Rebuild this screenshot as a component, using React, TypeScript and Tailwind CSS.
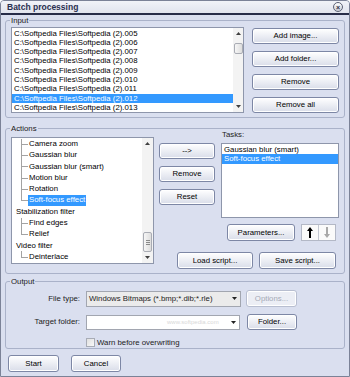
import React from "react";

const btnBase =
  "flex items-center justify-center rounded-[3px] border leading-none shadow-[inset_0_0_0_1px_#ffffff]";
const btnOn = "border-[#7d87a5] bg-linear-to-b from-white to-[#d9dde9] text-black";
const btnOff = "border-[#b8bed0] bg-[#eceef5] text-[#a4a9b6]";

function Btn({
  children,
  className = "",
  disabled = false,
}: {
  children: React.ReactNode;
  className?: string;
  disabled?: boolean;
}) {
  return (
    <button className={`${btnBase} ${disabled ? btnOff : btnOn} ${className}`}>
      {children}
    </button>
  );
}

function Arrow({ down = false, color = "#404040" }: { down?: boolean; color?: string }) {
  return (
    <svg width="5" height="3" viewBox="0 0 5 3">
      <path d={down ? "M0 0H5L2.5 3Z" : "M0 3H5L2.5 0Z"} fill={color} />
    </svg>
  );
}

// flat scrollbar: arrow, gap, thumb, track, arrow
function ScrollBar({
  gapTop,
  thumbH,
  grip = false,
  className = "",
}: {
  gapTop: number;
  thumbH: number;
  grip?: boolean;
  className?: string;
}) {
  return (
    <div className={`flex h-full flex-col items-center bg-[#f3f3f3] ${className}`}>
      <div className="flex h-[11px] w-full items-center justify-center">
        <Arrow />
      </div>
      <div style={{ height: gapTop }} />
      <div
        className="flex w-[9px] flex-col items-center justify-center gap-[1px] rounded-[2px] border border-[#a9acb4] bg-linear-to-r from-[#f6f6f6] to-[#dedede]"
        style={{ height: thumbH }}
      >
        {grip && (
          <>
            <div className="h-px w-[4px] bg-[#8a8a8a]" />
            <div className="h-px w-[4px] bg-[#8a8a8a]" />
            <div className="h-px w-[4px] bg-[#8a8a8a]" />
          </>
        )}
      </div>
      <div className="flex-1" />
      <div className="flex h-[11px] w-full items-center justify-center">
        <Arrow down />
      </div>
    </div>
  );
}

function Group({
  label,
  className = "",
  children,
}: {
  label: string;
  className?: string;
  children: React.ReactNode;
}) {
  return (
    <div className={`relative mx-[4px] rounded-[3px] border border-[#aab2c9] ${className}`}>
      <span className="absolute -top-[5px] left-[4px] bg-[#dadfef] px-[1px] leading-[9px] text-[#1a1a1a]">
        {label}
      </span>
      {children}
    </div>
  );
}

const files = [
  "C:\\Softpedia Files\\Softpedia (2).005",
  "C:\\Softpedia Files\\Softpedia (2).006",
  "C:\\Softpedia Files\\Softpedia (2).007",
  "C:\\Softpedia Files\\Softpedia (2).008",
  "C:\\Softpedia Files\\Softpedia (2).009",
  "C:\\Softpedia Files\\Softpedia (2).010",
  "C:\\Softpedia Files\\Softpedia (2).011",
  "C:\\Softpedia Files\\Softpedia (2).012",
  "C:\\Softpedia Files\\Softpedia (2).013",
];

const tree = [
  { t: "Camera zoom", child: true },
  { t: "Gaussian blur", child: true },
  { t: "Gaussian blur (smart)", child: true },
  { t: "Motion blur", child: true },
  { t: "Rotation", child: true },
  { t: "Soft-focus effect", child: true, last: true, sel: true },
  { t: "Stabilization filter" },
  { t: "Find edges", child: true },
  { t: "Relief", child: true, last: true },
  { t: "Video filter" },
  { t: "Deinterlace", child: true, last: true },
];

export default function App() {
  return (
    <div className="flex h-[377px] w-[350px] flex-col overflow-hidden rounded-t-[4px] border border-[#7b8297] bg-[#dadfef] font-['Liberation_Sans',Arial,sans-serif] text-[7.8px] text-black">
      {/* title bar */}
      <div className="flex h-[12px] items-center justify-between bg-linear-to-b from-[#f1f3f8] to-[#e1e4ee] pl-[6px] pr-[6px]">
        <span className="text-[8.5px] font-bold text-[#2a3050]">Batch processing</span>
        <div className="flex size-[10px] items-center justify-center rounded-full border border-[#5c6275] bg-linear-to-b from-white to-[#c9ccd6] text-[7px] font-bold leading-none text-[#2a2e3e]">
          ×
        </div>
      </div>
      <div className="h-[2px] bg-[#272c48]" />

      {/* Input */}
      <Group label="Input" className="mt-[5px] h-[98px]">
        <div className="flex pl-[5px] pr-[5px] pt-[6px]">
          <div className="flex h-[86px] w-[233px] border border-[#8e96ab] bg-white">
            <div className="flex-1 pt-[0.5px]">
              {files.map((f, i) => (
                <div
                  key={f}
                  className={`h-[9.33px] pl-[2px] leading-[9.33px] ${i === 7 ? "bg-[#3399ff] text-white" : ""}`}
                >
                  {f}
                </div>
              ))}
            </div>
            <ScrollBar gapTop={4} thumbH={11} className="w-[10px]" />
          </div>
          <div className="ml-[8px] mt-[1px] flex h-[85px] w-[87px] flex-col justify-between">
            <Btn className="h-[16px]">Add image...</Btn>
            <Btn className="h-[16px]">Add folder...</Btn>
            <Btn className="h-[16px]">Remove</Btn>
            <Btn className="h-[16px]">Remove all</Btn>
          </div>
        </div>
      </Group>

      {/* Actions */}
      <Group label="Actions" className="mt-[10px] h-[146px]">
        <div className="flex pl-[5px] pt-[1px]">
          <div className="mt-[7px] flex h-[127px] w-[143px] border border-[#8e96ab] bg-white">
            <div className="flex-1 pt-[0.5px]">
              {tree.map((n) =>
                n.child ? (
                  <div key={n.t} className="flex h-[11.3px] items-stretch">
                    <div className="ml-[9px] flex w-[7px] flex-col">
                      <div className="flex-1 border-b border-l border-[#a3a3a3]" />
                      <div
                        className={`flex-1 border-l ${n.last ? "border-transparent" : "border-[#a3a3a3]"}`}
                      />
                    </div>
                    <span
                      className={`my-[0.5px] px-[1px] leading-[10.3px] ${n.sel ? "bg-[#3399ff] text-white" : ""}`}
                    >
                      {n.t}
                    </span>
                  </div>
                ) : (
                  <div key={n.t} className="h-[11.3px] pl-[4px] leading-[11.3px]">
                    {n.t}
                  </div>
                ),
              )}
            </div>
            <ScrollBar gapTop={84} thumbH={20} grip className="w-[11px]" />
          </div>

          <div className="ml-[5px] flex w-[180px] flex-col">
            <div className="flex">
              <div className="mt-[13px] flex w-[56px] flex-col gap-[7px]">
                <Btn className="h-[16px]">--&gt;</Btn>
                <Btn className="h-[16px]">Remove</Btn>
                <Btn className="h-[16px]">Reset</Btn>
              </div>
              <div className="ml-[6px] flex w-[118px] flex-col">
                <div className="h-[10px] pl-[1px] leading-[10px] text-[#222]">Tasks:</div>
                <div className="mt-[3px] h-[75px] border border-[#8e96ab] bg-white pt-[0.5px]">
                  <div className="h-[9.5px] pl-[2px] leading-[9.5px]">Gaussian blur (smart)</div>
                  <div className="h-[9.5px] bg-[#3399ff] pl-[2px] leading-[9.5px] text-white">
                    Soft-focus effect
                  </div>
                </div>
              </div>
            </div>
            <div className="mr-[3px] mt-[6px] flex justify-end gap-[6px]">
              <Btn className="h-[17px] w-[68px]">Parameters...</Btn>
              <div className="flex h-[17px] w-[35px] border border-[#b3b8c6] bg-[#fafafa]">
                <div className="flex flex-1 items-center justify-center border-r border-[#c4c8d2]">
                  <svg width="6" height="11" viewBox="0 0 6 11">
                    <path d="M3 0L6 4H4V11H2V4H0Z" fill="#000" />
                  </svg>
                </div>
                <div className="flex flex-1 items-center justify-center">
                  <svg width="6" height="11" viewBox="0 0 6 11">
                    <path d="M3 11L6 7H4V0H2V7H0Z" fill="#a8a8a8" />
                  </svg>
                </div>
              </div>
            </div>
            <div className="mr-[3px] mt-[11px] flex justify-end gap-[6px]">
              <Btn className="h-[17px] w-[76px]">Load script...</Btn>
              <Btn className="h-[17px] w-[77px]">Save script...</Btn>
            </div>
          </div>
        </div>
      </Group>

      {/* Output */}
      <Group label="Output" className="mt-[7px] h-[68px]">
        <div className="flex flex-col pt-[8px]">
          <div className="flex items-center">
            <div className="w-[80px] pr-[6px] text-right text-[#222]">File type:</div>
            <div className="flex h-[16px] w-[155px] items-center border border-[#a2a6b0] bg-[#ebebeb]">
              <span className="flex-1 pl-[2px] text-[#222]">Windows Bitmaps (*.bmp;*.dib;*.rle)</span>
              <div className="mr-[1px] flex h-[12px] w-[10px] items-center justify-center">
                <Arrow down color="#222" />
              </div>
            </div>
            <Btn disabled className="ml-[5px] h-[17px] w-[51px]">
              Options...
            </Btn>
          </div>
          <div className="mt-[7px] flex items-center">
            <div className="w-[80px] pr-[6px] text-right text-[#222]">Target folder:</div>
            <div className="flex h-[15px] w-[154px] items-center border border-[#a2a6b0] bg-white">
              <span className="flex-1 pl-[80px] text-[6px] text-[#d8d8d8]">www.softpedia.com</span>
              <div className="mr-[1px] flex h-[11px] w-[10px] items-center justify-center">
                <Arrow down color="#222" />
              </div>
            </div>
            <Btn className="ml-[7px] h-[16px] w-[50px]">Folder...</Btn>
          </div>
          <div className="ml-[80px] mt-[7px] flex items-center gap-[2px]">
            <div className="size-[9px] border border-[#a8acb6] bg-linear-to-br from-[#e0e0e0] to-[#f8f8f8]" />
            <span className="text-[#222]">Warn before overwriting</span>
          </div>
        </div>
      </Group>

      {/* bottom buttons */}
      <div className="ml-[7px] mt-[6px] flex gap-[12px]">
        <Btn className="h-[17px] w-[51px]">Start</Btn>
        <Btn className="h-[17px] w-[50px]">Cancel</Btn>
      </div>
    </div>
  );
}
